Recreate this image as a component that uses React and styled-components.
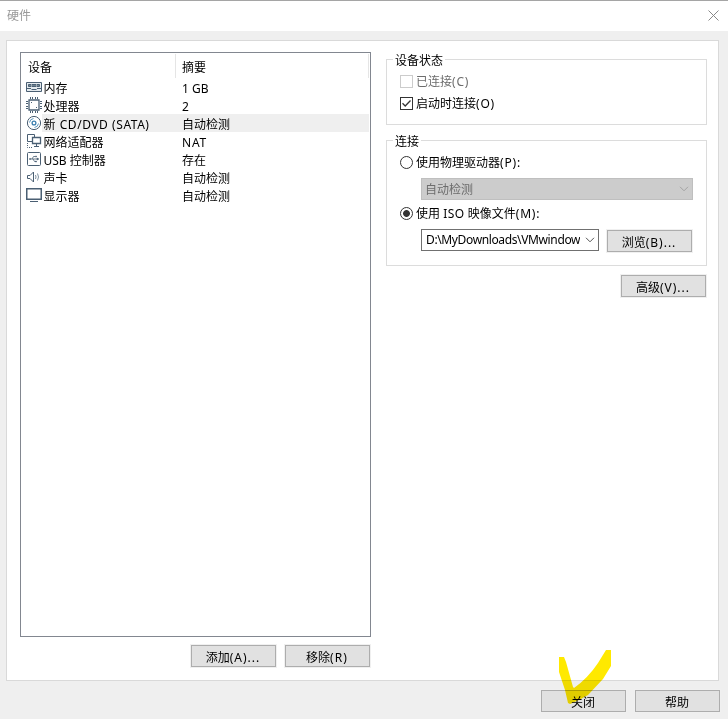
import React from "react";
import styled, { createGlobalStyle } from "styled-components";

const devices = [
  { icon: "memory", name: "内存", summary: "1 GB" },
  { icon: "cpu", name: "处理器", summary: "2" },
  { icon: "disc", name: "新 CD/DVD (SATA)", summary: "自动检测", selected: true, spacing: 0.55 },
  { icon: "network", name: "网络适配器", summary: "NAT", summarySpacing: 0.8 },
  { icon: "usb", name: "USB 控制器", summary: "存在" },
  { icon: "sound", name: "声卡", summary: "自动检测" },
  { icon: "display", name: "显示器", summary: "自动检测" },
];

const icons = {
  memory: (
    <>
      <path d="M.5 3.500h15v9H.5z" fill="#e4eaee" />
      <path d="M2.500 5.500h11v2h-11z" fill="#6f8290" />
      <path d="M5.500 5v3M10.500 5v3" stroke="#9fabb5" />
      <path d="M1 9.500h4M11 9.500h4M5.500 10.500h5" />
    </>
  ),
  cpu: (
    <>
      <path d="M3 3h10v10H3z" strokeWidth="1.300" />
      <path d="M4.500 0v2M6.500 0v2M9.500 0v2M11.500 0v2M4.500 14v2M6.500 14v2M9.500 14v2M11.500 14v2M0 4.500h2M0 6.500h2M0 9.500h2M0 11.500h2M14 4.500h2M14 6.500h2M14 9.500h2M14 11.500h2" />
      <path d="M5 5.500h1M10 10.500h1" />
    </>
  ),
  disc: (
    <>
      <circle cx="8" cy="8" r="6.6" />
      <circle cx="8" cy="8" r="1.9" stroke="#3b7faf" strokeWidth="1.300" />
      <path d="M3.500 7.500Q4 4 7.500 3.500M12.500 8.500Q12 12 8.500 12.500" stroke="#5d98c0" />
    </>
  ),
  network: (
    <>
      <path d="M6 8.500H1.500v-7h7V4" />
      <path d="M6.500 4.500h8v6h-8z" fill="#fff" strokeWidth="1.300" />
      <path d="M10.500 10.500v3M8 13.500h5" />
      <path d="M1.500 10v4.500h5" strokeDasharray="1 1" />
    </>
  ),
  usb: (
    <>
      <rect x="1.500" y="1.500" width="13" height="13" rx="1" />
      <path d="M4 8h8M6 8l1.500-2.500H9M7 8l1.500 2.500H10" strokeWidth=".8" />
      <path d="M3.500 7.500h1v1h-1zM11 7l2 1-2 1zM9.500 5h1v1h-1zM9.500 10h1v1h-1z" fill="#4a5f73" strokeWidth=".5" />
    </>
  ),
  sound: (
    <>
      <path d="M1.500 6.500H4L7.500 3v10L4 9.500H1.500z" />
      <path d="M9.500 6q1 2 0 4M11.500 4.500q2 3.500 0 7" stroke="#7f92a1" />
    </>
  ),
  display: (
    <>
      <path d="M.75 1.750h14.500v10.500H.75z" strokeWidth="1.500" />
      <path d="M4 14.500h8" />
    </>
  ),
};

const DeviceIcon = ({ name }) => (
  <IconBox viewBox="0 0 16 16">{icons[name]}</IconBox>
);

const Chevron = () => (
  <ChevronSvg viewBox="0 0 10 6">
    <path d="M1 .8l4 4 4-4" />
  </ChevronSvg>
);

const App = () => {
  return (
    <>
      <GlobalStyle />
      <Window>
        <TitleBar>
          <span>硬件</span>
          <CloseIcon viewBox="0 0 11 11">
            <path d="M.5.5l10 10M10.500.5l-10 10" />
          </CloseIcon>
        </TitleBar>
        <Panel>
          <DeviceColumn>
            <DeviceList>
              <ListHeader>
                <HeaderCell>设备</HeaderCell>
                <HeaderCell>摘要</HeaderCell>
              </ListHeader>
              {devices.map((device) => (
                <DeviceRow key={device.icon}>
                  <DeviceIcon name={device.icon} />
                  <DeviceName $selected={device.selected} $spacing={device.spacing}>
                    {device.name}
                  </DeviceName>
                  <DeviceSummary $selected={device.selected} $spacing={device.summarySpacing}>
                    {device.summary}
                  </DeviceSummary>
                </DeviceRow>
              ))}
            </DeviceList>
            <ListActions>
              <Button>
                添加<Key $spacing={1}>(A)...</Key>
              </Button>
              <Button>
                移除<Key $spacing={1.1}>(R)</Key>
              </Button>
            </ListActions>
          </DeviceColumn>
          <SettingsColumn>
            <Group $height={66}>
              <Legend>设备状态</Legend>
              <Option $disabled $top={3}>
                <CheckBox $disabled />
                <OptionText>
                  已连接<Key>(C)</Key>
                </OptionText>
              </Option>
              <Option $top={4}>
                <CheckBox>
                  <svg viewBox="0 0 11 11">
                    <path d="M1.500 5.300l2.700 2.700 5.300-5.500" />
                  </svg>
                </CheckBox>
                <OptionText>
                  启动时连接<Key>(O)</Key>
                </OptionText>
              </Option>
            </Group>
            <Group $height={126}>
              <Legend>连接</Legend>
              <Option $top={3}>
                <Radio />
                <OptionText>
                  使用物理驱动器<Key>(P):</Key>
                </OptionText>
              </Option>
              <Select $width={272} $disabled>
                <span>自动检测</span>
                <Chevron />
              </Select>
              <Option $top={4}>
                <Radio $checked />
                <OptionText>
                  使用 <Key $spacing={0.5}>ISO</Key> 映像文件<Key>(M):</Key>
                </OptionText>
              </Option>
              <FileRow>
                <Select $width={178}>
                  <span>D:\MyDownloads\VMwindow</span>
                  <Chevron />
                </Select>
                <BrowseButton>
                  浏览<Key $spacing={1}>(B)...</Key>
                </BrowseButton>
              </FileRow>
            </Group>
            <AdvancedButton>
              高级<Key $spacing={1}>(V)...</Key>
            </AdvancedButton>
          </SettingsColumn>
        </Panel>
        <Footer>
          <Button>关闭</Button>
          <Button>帮助</Button>
        </Footer>
        <Highlight viewBox="0 0 52 54">
          <path d="M0 7h5l2 5 7 25 1 1Q29 28 39 13L47 0h5v16l-8 13-15 16-9 5-9 4-2-1L6 40 0 22z" />
        </Highlight>
      </Window>
    </>
  );
};

const GlobalStyle = createGlobalStyle`
  * {
    box-sizing: border-box;
  }
  body {
    margin: 0;
    background: #efefef;
    color: #000;
    font: 12px/18px "Noto Sans", "Noto Sans CJK SC", sans-serif;
    overflow: hidden;
  }
`;

const Window = styled.div`
  position: relative;
  display: flex;
  flex-direction: column;
  width: 728px;
  height: 719px;
  background: #efefef;
`;

const TitleBar = styled.header`
  display: flex;
  justify-content: space-between;
  align-items: center;
  height: 31px;
  padding: 0 9px 1px 7px;
  border-top: 1px solid #a5a5a5;
  background: #fff;
  color: #999;
  span {
    padding-top: 1px;
  }
`;

const CloseIcon = styled.svg`
  width: 11px;
  height: 11px;
  stroke: #888;
`;

const Panel = styled.main`
  display: flex;
  gap: 15px;
  width: 713px;
  height: 641px;
  margin: 9px 0 0 6px;
  padding: 11px 11px 0 13px;
  border: 1px solid #d9d9d9;
  background: #fff;
`;

const DeviceColumn = styled.section`
  flex: none;
  width: 351px;
`;

const DeviceList = styled.div`
  height: 585px;
  padding: 1px 1px 0 5px;
  border: 1px solid #828790;
`;

const ListHeader = styled.div`
  display: grid;
  grid-template-columns: 150px 193px;
  height: 24px;
`;

const HeaderCell = styled.div`
  padding: 5px 0 0 2px;
  border-right: 1px solid #e5e5e5;
  & + & {
    padding-left: 6px;
  }
`;

const DeviceRow = styled.div`
  display: flex;
  align-items: center;
  height: 18px;
`;

const IconBox = styled.svg`
  flex: none;
  width: 16px;
  height: 16px;
  fill: none;
  stroke: #4a5f73;
`;

const DeviceName = styled.div`
  width: 134px;
  height: 18px;
  padding: 1px 0 0 1.5px;
  background: ${(props) => (props.$selected ? "#efefef" : "transparent")};
  letter-spacing: ${(props) => props.$spacing || 0}px;
  line-height: 19px;
  white-space: nowrap;
`;

const DeviceSummary = styled.div`
  flex: 1;
  height: 18px;
  padding: 1px 0 0 6px;
  background: ${(props) => (props.$selected ? "#efefef" : "transparent")};
  letter-spacing: ${(props) => props.$spacing || 0}px;
  line-height: 19px;
`;

const Key = styled.span`
  letter-spacing: ${(props) => props.$spacing || 0.8}px;
`;

const Button = styled.button`
  width: 85px;
  height: 22px;
  padding: 3px 1px 0 0;
  border: 1px solid #adadad;
  outline: 1px solid #f0f0f0;
  background: #e1e1e1;
  color: #000;
  font: inherit;
  line-height: 17px;
`;

const BrowseButton = styled(Button)`
  align-self: flex-end;
`;

const AdvancedButton = styled(Button)`
  margin-right: 1px;
`;

const ListActions = styled.div`
  display: flex;
  justify-content: flex-end;
  gap: 9px;
  padding: 8px 1px 0 0;
`;

const SettingsColumn = styled.section`
  display: flex;
  flex: none;
  flex-direction: column;
  align-items: flex-end;
  width: 321px;
  padding-top: 7px;
`;

const Group = styled.section`
  width: 321px;
  height: ${(props) => props.$height}px;
  margin-bottom: ${(props) => (props.$height > 100 ? 9 : 15)}px;
  padding-left: 13px;
  border: 1px solid #dcdcdc;
`;

const Legend = styled.div`
  width: fit-content;
  height: 18px;
  margin: -9px 0 0 -7px;
  padding: 0 2px;
  background: #fff;
  line-height: 20px;
`;

const Option = styled.label`
  display: flex;
  align-items: center;
  gap: 3px;
  height: 18px;
  margin-top: ${(props) => props.$top}px;
  color: ${(props) => (props.$disabled ? "#6d6d6d" : "#000")};
`;

const OptionText = styled.span`
  padding-top: 2px;
`;

const CheckBox = styled.span`
  width: 13px;
  height: 13px;
  border: 1px solid ${(props) => (props.$disabled ? "#ccc" : "#333")};
  svg {
    display: block;
    fill: none;
    stroke: #333;
    stroke-width: 1.3;
  }
`;

const Radio = styled.span`
  width: 13px;
  height: 13px;
  border: 1px solid #333;
  border-radius: 50%;
  background: ${(props) => (props.$checked ? "radial-gradient(circle, #333 3px, #fff 3.8px)" : "#fff")};
`;

const Select = styled.div`
  display: flex;
  align-items: center;
  justify-content: space-between;
  width: ${(props) => props.$width}px;
  height: 22px;
  margin: ${(props) => (props.$disabled ? "7px 0 0 21px" : "0")};
  padding: 0 3px 0 ${(props) => (props.$disabled ? 3 : 4)}px;
  border: 1px solid ${(props) => (props.$disabled ? "#bfbfbf" : "#707070")};
  background: ${(props) => (props.$disabled ? "#ccc" : "#fff")};
  color: ${(props) => (props.$disabled ? "#6d6d6d" : "#000")};
  stroke: ${(props) => (props.$disabled ? "#a3a3a3" : "#555")};
  span {
    width: 154px;
    padding-top: ${(props) => (props.$disabled ? 2 : 0)}px;
    letter-spacing: ${(props) => (props.$disabled ? 0 : -0.37)}px;
    overflow: hidden;
    white-space: nowrap;
  }
`;

const ChevronSvg = styled.svg`
  width: 10px;
  height: 6px;
  fill: none;
`;

const FileRow = styled.div`
  display: flex;
  gap: 8px;
  height: 23px;
  margin: 7px 0 0 21px;
`;

const Footer = styled.footer`
  display: flex;
  justify-content: flex-end;
  gap: 9px;
  padding: 9px 8px 0 0;
`;

const Highlight = styled.svg`
  position: absolute;
  left: 559px;
  top: 650px;
  width: 52px;
  height: 54px;
  fill: #ffe900;
  mix-blend-mode: multiply;
  pointer-events: none;
`;

export default App;
